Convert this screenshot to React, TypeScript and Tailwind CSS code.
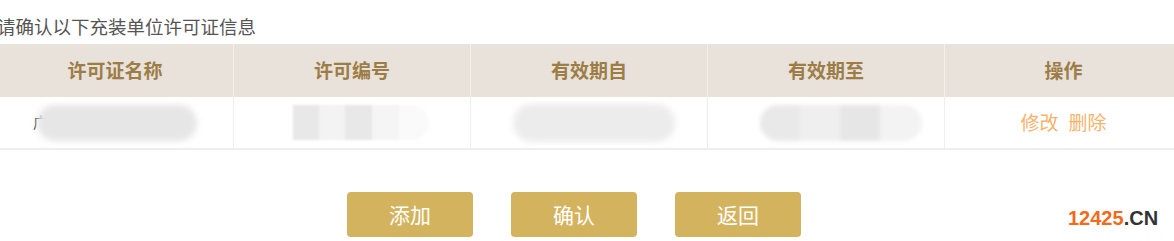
import React from "react";

const cjk = { fontFamily: '"Microsoft YaHei", "Noto Sans CJK SC", "Noto Sans", sans-serif' };

function Blur({ className }: { className: string }) {
  return <div className={"rounded-full blur-[3px] " + className} />;
}

export default function App() {
  const headers = ["许可证名称", "许可编号", "有效期自", "有效期至", "操作"];
  return (
    <div className="relative w-[1174px] h-[241px] overflow-hidden bg-white" style={cjk}>
      <div className="pt-[14px] h-[44px] -ml-[3px] text-[18.5px] leading-[25px] text-[#555555] whitespace-nowrap">
        请确认以下充装单位许可证信息
      </div>
      <div className="-ml-[3px] w-[1185px]">
        <div className="grid grid-cols-5 h-[53px] bg-[#e9e2db]">
          {headers.map((h, i) => (
            <div
              key={h}
              className={
                "flex items-center justify-center text-[19px] font-bold text-[#9d7d47] " +
                (i < 4 ? "border-r border-[#f4f0ec]" : "")
              }
            >
              {h}
            </div>
          ))}
        </div>
        <div className="grid grid-cols-5 h-[53px] border-b-2 border-[#eeeeee]">
          <div className="relative flex items-center justify-center border-r border-[#eeeeee]">
            <span className="absolute left-[36px] top-[14px] text-[15px] text-[#444]">广</span>
            <div className="flex items-center ml-[4px]">
              <Blur className="w-[160px] h-[36px] bg-[#e6e6e6]" />
            </div>
          </div>
          <div className="flex items-center justify-center border-r border-[#eeeeee]">
            <div className="flex ml-[18px] blur-[1px]">
              <div className="w-[26px] h-[35px] bg-[#e8e8e8]" />
              <div className="w-[26px] h-[35px] bg-[#f3f3f3]" />
              <div className="w-[27px] h-[35px] bg-[#e8e8e8]" />
              <div className="w-[27px] h-[35px] bg-[#f5f5f5]" />
              <div className="w-[30px] h-[35px] rounded-r-full bg-[#fafafa]" />
            </div>
          </div>
          <div className="flex items-center justify-center border-r border-[#eeeeee]">
            <Blur className="ml-[10px] w-[162px] h-[38px] bg-[#ececec]" />
          </div>
          <div className="flex items-center justify-center border-r border-[#eeeeee]">
            <div className="flex ml-[30px] blur-[2px]">
              <div className="w-[40px] h-[36px] rounded-l-full bg-[#e9e9e9]" />
              <div className="w-[40px] h-[36px] bg-[#efefef]" />
              <div className="w-[40px] h-[36px] bg-[#e6e6e6]" />
              <div className="w-[42px] h-[36px] rounded-r-full bg-[#f3f3f3]" />
            </div>
          </div>
          <div className="flex items-center justify-center gap-[10px] text-[19px] text-[#f7b26b]">
            <span>修改</span>
            <span>删除</span>
          </div>
        </div>
      </div>
      <div className="flex mt-[42px] pl-[347px] gap-[38px]">
        {["添加", "确认", "返回"].map((t) => (
          <div
            key={t}
            className="w-[126px] h-[45px] rounded-[4px] bg-[#d4b35f] flex items-center justify-center text-[21px] text-white"
          >
            {t}
          </div>
        ))}
      </div>
      <div
        className="absolute left-[1068px] top-[206px] text-[20px] font-bold leading-[24px]"
        style={{ fontFamily: '"Liberation Sans", Arial, sans-serif' }}
      >
        <span className="text-[#f26a1b]">12425</span>
        <span className="text-[#333333]">.CN</span>
      </div>
    </div>
  );
}
